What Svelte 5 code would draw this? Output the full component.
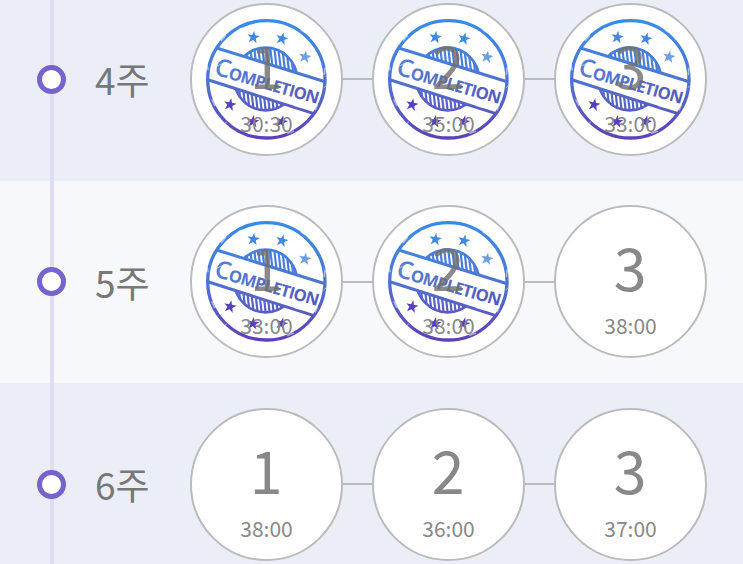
<script>
  const weeks = [
    { week: 4, lessons: [
      { no: 1, time: '30:30', done: true },
      { no: 2, time: '35:00', done: true },
      { no: 3, time: '33:00', done: true },
    ] },
    { week: 5, lessons: [
      { no: 1, time: '33:00', done: true },
      { no: 2, time: '38:00', done: true },
      { no: 3, time: '38:00', done: false },
    ] },
    { week: 6, lessons: [
      { no: 1, time: '38:00', done: false },
      { no: 2, time: '36:00', done: false },
      { no: 3, time: '37:00', done: false },
    ] },
  ];

  // centre x, centre y, turn
  const stars = [
    [206, 112, 8],
    [292, 116, 14],
    [361, 171, 10],
    [136, 314, 12],
    [205, 365, 6],
    [291, 365, 14],
  ];
  const hatches = Array.from({ length: 18 }, (_, i) => 146 + i * 12);
</script>

<svg class="defs" width="0" height="0">
  <defs>
    <linearGradient id="ink" gradientUnits="userSpaceOnUse" x1="245" y1="58" x2="245" y2="420">
      <stop offset="0" stop-color="#388ce6" />
      <stop offset="0.45" stop-color="#4b78d4" />
      <stop offset="0.7" stop-color="#5860c4" />
      <stop offset="1" stop-color="#5c3fb6" />
    </linearGradient>
    <linearGradient id="letters" gradientUnits="userSpaceOnUse" x1="0" y1="-50" x2="318" y2="10">
      <stop offset="0" stop-color="#5580d2" />
      <stop offset="1" stop-color="#5358be" />
    </linearGradient>
    <clipPath id="above"><path d="M60 40H440V250L60 129Z" /></clipPath>
    <clipPath id="below"><path d="M60 235L440 358V440H60Z" /></clipPath>
    <clipPath id="core"><circle cx="243" cy="237" r="94" /></clipPath>
    <g id="stamp">
      <circle cx="245" cy="238" r="176" fill="none" stroke="url(#ink)" stroke-width="10" />
      <g stroke="url(#ink)" fill="none" stroke-width="6.5">
        <g clip-path="url(#above)">
          <circle cx="243" cy="237" r="94" stroke-width="8" />
          <g clip-path="url(#core)">
            {#each hatches as x}
              <path d="M{x - 12} 120L{x + 14} 340" />
            {/each}
          </g>
        </g>
        <g clip-path="url(#below)">
          <circle cx="243" cy="237" r="94" stroke-width="8" />
          <g clip-path="url(#core)">
            {#each hatches as x}
              <path d="M{x - 12} 120L{x + 14} 340" />
            {/each}
          </g>
        </g>
        <path d="M96 144L424 246M72 240L388 341" stroke-width="9" />
      </g>
      {#each stars as [x, y, turn]}
        <path
          fill={x > 350 ? '#6d9fe2' : y < 150 ? '#4288df' : '#5541bb'}
          transform="translate({x} {y}) rotate({turn}) scale(1.1)"
          d="M0-18L4-6H17L7 2L11 15L0 7L-11 15L-7 2L-17-6H-4Z"
        />
      {/each}
      <text transform="translate(86 223) rotate(16)" fill="url(#letters)" textLength="324">
        <tspan class="cap">C</tspan><tspan class="small">OMPLETION</tspan>
      </text>
      <!-- worn spots in the ink -->
      <g fill="none" stroke="#fff" stroke-linecap="round" opacity="0.5">
        <path d="M110 121l12-14M350 90l12 8M372 105l8 10M67 195l3 14M421 205l-2 18M82 300l8 16M310 400l16-6M398 315l-6 14" stroke-width="5" />
        <path d="M170 84l-8 4M424 258l-6 5M120 370l6-4M330 318l22 6M94 200l16-8M112 218l10-6" stroke-width="3" />
      </g>
    </g>
  </defs>
</svg>

<div class="schedule">
  {#each weeks as { week, lessons }}
    <section class="week">
      <div class="rail"><span class="dot"></span></div>
      <h2>{week}주</h2>
      <div class="lessons">
        {#each lessons as lesson}
          <div class="lesson">
            {#if lesson.done}
              <svg class="stamp" viewBox="16 9 459 459"><use href="#stamp" /></svg>
            {/if}
            <span class="no" class:done={lesson.done}>{lesson.no}</span>
            <span class="time">{lesson.time}</span>
          </div>
        {/each}
      </div>
    </section>
  {/each}
</div>

<style>
  :global(body) {
    margin: 0;
    overflow: hidden;
  }

  .defs {
    position: absolute;
  }

  .schedule {
    height: 564px;
    overflow: hidden;
    font-family: "Noto Sans CJK KR", sans-serif;
    color: #777;
  }

  .week {
    display: flex;
    align-items: center;
    height: 202.3px;
    background-color: #ebeef6;
  }

  .week:first-child {
    margin-top: -21.7px;
  }

  .week:nth-child(even) {
    background-color: #f7f8fc;
  }

  .rail {
    display: flex;
    align-items: center;
    justify-content: center;
    align-self: stretch;
    width: 29px;
    margin-left: 37px;
    background: linear-gradient(#e1dcf3, #e1dcf3) center / 4px 100% no-repeat;
  }

  .dot {
    box-sizing: border-box;
    width: 29px;
    height: 29px;
    border: 5px solid #7663cb;
    border-radius: 50%;
    background-color: #fff;
  }

  h2 {
    width: 95px;
    margin: 0 0 0 29px;
    font-size: 37px;
    font-weight: 400;
    line-height: 54px;
  }

  .lessons {
    display: flex;
    gap: 29px;
    background: linear-gradient(#bbb, #bbb) center / 100% 2px no-repeat;
  }

  .lesson {
    position: relative;
    box-sizing: border-box;
    display: flex;
    flex-direction: column;
    align-items: center;
    width: 153px;
    height: 153px;
    padding-top: 21px;
    border: 2px solid #bbb;
    border-radius: 50%;
    background-color: #fff;
  }

  .stamp {
    position: absolute;
    inset: -2px;
    width: 153px;
    height: 153px;
  }

  .stamp + .no,
  .stamp ~ .time {
    position: relative;
  }

  .no {
    padding-right: 1px;
    font-size: 59px;
    line-height: 76px;
    color: #888;
  }

  .no.done {
    color: rgba(112, 112, 112, 0.82);
  }

  .time {
    margin-top: 5px;
    font-size: 21px;
    line-height: 32px;
    color: #888;
  }

  .cap,
  .small {
    font-family: "Open Sans", sans-serif;
    font-weight: 700;
  }

  .cap {
    font-size: 74px;
    font-weight: 600;
  }

  .small {
    font-size: 50px;
  }
</style>
